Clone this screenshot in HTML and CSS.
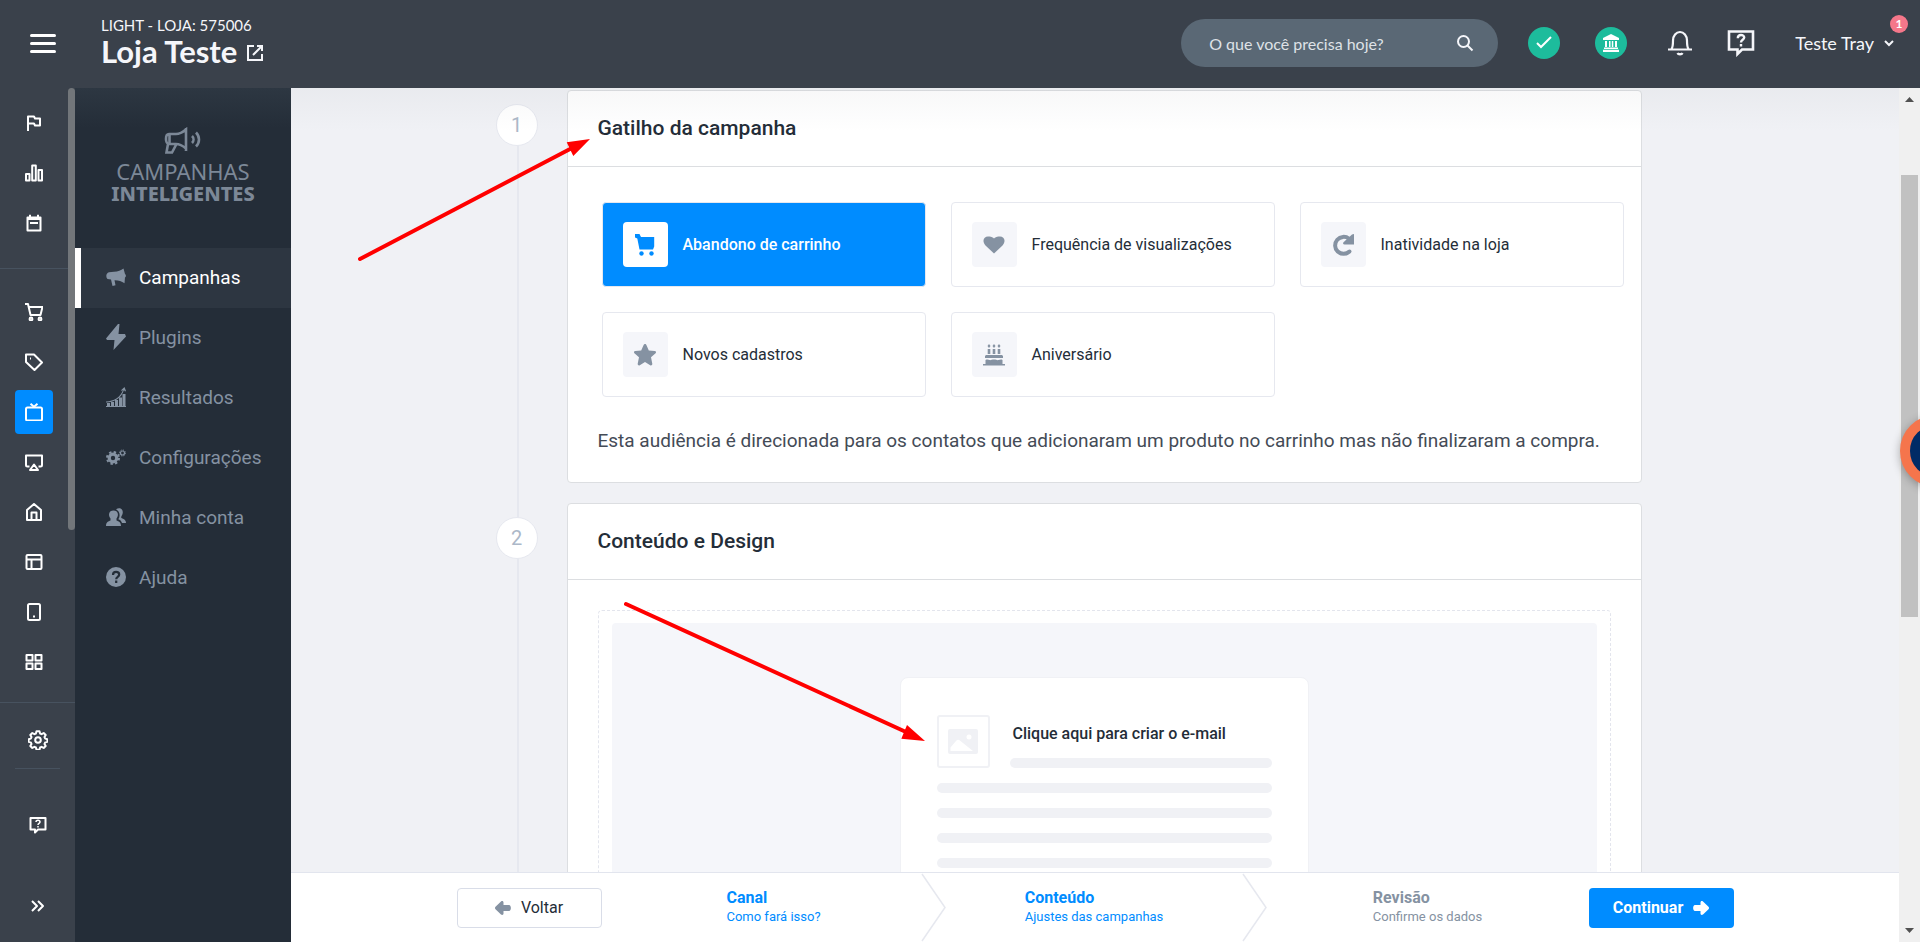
FILE: index.html
```html
<!DOCTYPE html>
<html lang="pt-BR">
<head>
<meta charset="utf-8">
<meta name="viewport" content="width=device-width, initial-scale=1">
<title>Campanhas Inteligentes - Loja Teste</title>
<link rel="stylesheet" href="styles.css">
</head>
<body>
<header class="topbar">
  <button class="menu-toggle" aria-label="Menu"><span></span><span></span><span></span></button>
  <div class="store">
    <span class="store-plan">LIGHT - LOJA: 575006</span>
    <a class="store-name" href="#">Loja Teste
      <svg width="16" height="16" viewBox="0 0 16 16" fill="none" stroke="currentColor" stroke-width="2"><path d="M7 1H1v14h14V9M10 1h5v5M15 1 6 10"/></svg>
    </a>
  </div>
  <form class="search">
    <input type="text" aria-label="Buscar" placeholder="O que você precisa hoje?">
    <button type="button" aria-label="Pesquisar"><svg width="18" height="18" viewBox="0 0 18 18" fill="none" stroke="currentColor" stroke-width="2"><circle cx="7.500" cy="7.500" r="5.500"/><path d="m11.500 11.500 5 5"/></svg></button>
  </form>
  <nav class="top-actions">
    <button class="round" aria-label="Status"><svg width="16" height="14" viewBox="0 0 16 14" fill="none" stroke="currentColor" stroke-width="2"><path d="m1 7 4 4L15 1"/></svg></button>
    <button class="round" aria-label="Banco"><svg width="18" height="18" viewBox="0 0 18 18" fill="currentColor"><path d="M9 0 1 4v2h16V4zM3 7h2v6H3zM7 7h1.500v6H7zM9.800 7h1.500v6H9.800zM13 7h2v6h-2zM2 13.500h14V15H2zM1 15.800h16V18H1z"/></svg></button>
    <button class="plain" aria-label="Notificações"><svg width="26" height="26" viewBox="0 0 26 26" fill="none" stroke="currentColor" stroke-width="2.200"><path d="M1 19.500h24M4.500 19c1.500-2 1.500-4 1.500-8.500a7 8.500 0 0 1 14 0c0 4.500 0 6.500 1.500 8.500"/><path d="M10.500 23a2.600 2 0 0 0 5 0" fill="currentColor"/></svg></button>
    <button class="plain" aria-label="Suporte"><svg width="28" height="28" viewBox="0 0 28 28" fill="none" stroke="currentColor" stroke-width="2.600"><path d="M2 2.500h24v18H15l-4.500 4.500v-4.500H2z"/><path d="M10.800 9.200c0-4.400 6.400-4 6.400-.6 0 2.200-3.200 2.200-3.200 4.800M14 15v2.600" stroke-width="2.400"/></svg></button>
    <button class="user">Teste Tray <svg width="10" height="7" viewBox="0 0 10 7" fill="none" stroke="currentColor" stroke-width="2"><path d="m1 1 4 4 4-4"/></svg><span class="badge">1</span></button>
  </nav>
</header>

<div class="shell">
  <aside class="rail">
    <div class="rail-scroll">
      <nav class="rail-list">
        <a href="#" aria-label="Início"><svg viewBox="0 0 18 18"><path d="M3 17V2.500h6l1 2h5v7h-5l-1-2H3"/></svg></a>
        <a href="#" aria-label="Relatórios"><svg viewBox="0 0 18 18"><path d="M1 10h3.500v6.500H1zM7.200 1.500h3.600v15H7.200zM13.500 6H17v10.500h-3.500z"/></svg></a>
        <a href="#" aria-label="Agenda"><svg viewBox="0 0 18 18"><path d="M2.500 3.500h13v13h-13zM5 .8v3M13 .8v3M2.500 5h13M5 9h8"/></svg></a>
        <hr>
        <a href="#" aria-label="Pedidos"><svg viewBox="0 0 18 18"><path d="M0 1h3l2.500 11h10L17.500 4H4"/><circle cx="6" cy="16" r="1.400"/><circle cx="15" cy="16" r="1.400"/></svg></a>
        <a href="#" aria-label="Produtos"><svg viewBox="0 0 18 18"><path d="M1 1.500h8l8 8-7.500 7.500L1 9zM5 5.500h1"/></svg></a>
        <a href="#" aria-label="Marketing" class="on"><svg viewBox="0 0 18 18"><rect x="1" y="4.500" width="16" height="13" rx="1.500"/><path d="m5.500.8 3.500 3 3.500-3"/></svg></a>
        <a href="#" aria-label="Canais"><svg viewBox="0 0 18 18"><path d="M4.500 13.500h-2C1.500 13.500 1 13 1 12V2.500h16V12c0 1-.5 1.500-1.500 1.500h-2M9 11.500l4 5.500H5z"/></svg></a>
        <a href="#" aria-label="Minha loja"><svg viewBox="0 0 18 18"><path d="M2 7 9 1l7 6v10H2zM6.500 17V9.500h5V17"/></svg></a>
        <a href="#" aria-label="Layout"><svg viewBox="0 0 18 18"><rect x="1.500" y="2" width="15" height="14" rx="1"/><path d="M1.500 6.500h15M6.500 6.500V16"/></svg></a>
        <a href="#" aria-label="Mobile"><svg viewBox="0 0 18 18"><rect x="3" y="1" width="12" height="16" rx="1.500"/><path d="M8 13.500h2M9 12.500v2"/></svg></a>
        <a href="#" aria-label="Aplicativos"><svg viewBox="0 0 18 18"><path d="M1.500 2h6v5.500h-6zM10.500 2h6v5.500h-6zM1.500 10.500h6V16h-6zM10.500 10.500h6V16h-6z"/></svg></a>
      </nav>
      <div class="rail-thumb"></div>
    </div>
    <div class="rail-foot">
      <a class="gear" href="#" aria-label="Configurações"><svg viewBox="0 0 20 20"><circle cx="10" cy="10" r="2.800"/><path d="M8.500 1.200h3l.6 2.300 1.500.7 2.100-1.200 2 2-1.200 2.100.7 1.500 2.200.6v2.600l-2.200.6-.7 1.500 1.200 2.100-2 2-2.100-1.200-1.500.7-.6 2.300h-3l-.6-2.300-1.500-.7L4.300 18l-2-2 1.200-2.100-.7-1.500-2.200-.6V9.200l2.200-.6.7-1.500L2.300 5l2-2 2.100 1.200 1.500-.7z"/></svg></a>
      <a class="help" href="#" aria-label="Suporte"><svg viewBox="0 0 18 18"><path d="M1.500 2h15v11.500H9L6 16.500v-3H1.500z"/><path d="M7 6c0-2.400 4-2.400 4 0 0 1.400-2 1.300-2 3M9 10v1.600" stroke-width="1.500"/></svg></a>
      <button class="expand" aria-label="Expandir"><svg viewBox="0 0 18 18"><path d="m3 4 5 5-5 5M9 4l5 5-5 5"/></svg></button>
    </div>
  </aside>

  <aside class="sidebar">
    <div class="brand">
      <svg width="40" height="28" viewBox="0 0 40 28" fill="none" stroke="currentColor" stroke-width="2.600"><path d="M6 7h7c4 0 7-2 10-4.500v19C20 19 17 17 13 17H6c-4 0-4-10 0-10zM6.500 7v10M5 17l-1.500 8.500H9L13.500 17M23 1v23M29 9c2 2 2 5 0 7M33 5.500c4 4 4 10 0 14"/></svg>
      <span class="brand-top">CAMPANHAS</span>
      <span class="brand-bottom">INTELIGENTES</span>
    </div>
    <nav class="side-list">
      <a class="current" href="#"><svg viewBox="0 0 20 20"><path d="M17.500 1.500C15 3.500 12 4.500 8 4.800l-5 .4C0 6-.5 10 1.500 12l3.500.5 1.500 6.500 3-.7-1-5c4-.1 7 1 10 3l.5-6c1.200-.5 1.200-2.800 0-3.300z"/></svg>Campanhas</a>
      <a href="#"><svg class="bolt" viewBox="0 0 20 26"><path d="M12 0 0 14.500l1 1.500h7.500L7.500 26 20 12.500 19 10h-6.500L13.500 0z"/></svg>Plugins</a>
      <a href="#"><svg viewBox="0 0 20 20"><path d="M1 16h3v3H1zM5 15h3v4H5zM9 13h3v6H9zM13 10.500h3V19h-3zM16.500 7h3v12h-3zM0 19h20v1H0zM0 14.500C8 14 14 11 17 3l-1.500 1-.2-1L18.500 0l1.500 4-1 .4-1-1.400C15 12 8 15.200 0 15.400z"/></svg>Resultados</a>
      <a href="#"><svg viewBox="0 0 20 20"><circle cx="7" cy="11" r="3.800" fill="none" stroke="currentColor" stroke-width="3.200"/><circle cx="7" cy="11" r="6" fill="none" stroke="currentColor" stroke-width="2" stroke-dasharray="2.400 2.310"/><circle cx="16.500" cy="6" r="2" fill="none" stroke="currentColor" stroke-width="1.200"/><circle cx="16.500" cy="6" r="3" fill="none" stroke="currentColor" stroke-width="1" stroke-dasharray="1.200 1.156"/></svg>Configurações</a>
      <a href="#"><svg viewBox="0 0 20 20"><path d="M7.500 3.500c5 0 5.500 5 3 8v2c2 .8 4.500 1.500 4.500 5.500H0c0-4 2.500-4.700 4.500-5.500v-2C2 8.500 2.500 3.500 7.500 3.500z"/><path d="M10 2.300C13.500-.5 18 2 16.500 7c-.5 1.500-1.500 2.500-1.200 4 2 .8 4.700 1.700 4.700 5h-4c-.5-2-2-3-3.700-3.700C14.500 9 14 4.500 10 2.300z"/></svg>Minha conta</a>
      <a href="#"><svg viewBox="0 0 20 20"><circle cx="10" cy="10" r="10"/><path d="M7 8c0-4.200 6.200-3.800 6.200-.4 0 2.400-3 2-3 4.600M10.200 13.500V16" fill="none" stroke="#242d38" stroke-width="2.200"/></svg>Ajuda</a>
    </nav>
  </aside>

  <main class="main">
    <div class="content">
      <div class="stage">
        <section class="step">
          <div class="marker"><span>1</span></div>
          <div class="card">
            <h2>Gatilho da campanha</h2>
            <div class="card-body">
              <div class="options">
                <button class="option selected"><span class="tile"><svg viewBox="0 0 22 22"><path d="M1 0h4.500l1.500 3h13.200v9.500L19 15.500H5.500L3.300 4.500 1 3.500z"/><circle cx="7.500" cy="19.500" r="2.200"/><circle cx="17.500" cy="19.500" r="2.200"/></svg></span>Abandono de carrinho</button>
                <button class="option"><span class="tile"><svg viewBox="0 0 22 22"><path d="M11 19.500 2.500 11.500C-1.500 6.500 1 2.500 5 2.500h1.500C8.500 2.500 10 3.500 11 4.500c1-1 2.500-2 4.500-2H17c4 0 6.500 4 2.500 9z"/></svg></span>Frequência de visualizações</button>
                <button class="option"><span class="tile"><svg viewBox="0 0 22 22"><path d="M17.500 17.500A8.500 8.500 0 1 1 17 4.800" fill="none" stroke="currentColor" stroke-width="4" stroke-linecap="round"/><path d="M22 0v10.500H12.500c-1.500 0-1.800-1.500-1-2.300L20 .5z"/></svg></span>Inatividade na loja</button>
                <button class="option"><span class="tile"><svg viewBox="0 0 22 22"><path d="M11 0c.7 0 1.200.5 1.500 1.200l2.300 5.300 6 .6c1.200.2 1.600 1.300.8 2.100L17 13.300l1.300 6.500c.2 1.300-1 2.200-2.100 1.500L11 18l-5.200 3.300c-1.100.7-2.300-.2-2.100-1.500L5 13.300.4 9.200C-.4 8.400 0 7.300 1.200 7.100l6-.6 2.300-5.300C9.800.5 10.300 0 11 0z"/></svg></span>Novos cadastros</button>
                <button class="option"><span class="tile"><svg viewBox="0 0 22 22"><path d="m6 0 1.500 2L6 4 4.500 2zM11 0l1.500 2L11 4 9.500 2zM16 0l1.500 2L16 4l-1.500-2zM4.700 5h2.600v5H4.700zM9.700 5h2.600v5H9.700zM14.700 5h2.600v5h-2.600zM3 11h16l1 1v2H2v-2zM2.500 16c2-1 3-.3 4 .1s2.500-.6 4.500-.6 3 1 4.500.6 2.500-1 4-.1V20H22v1.500H0V20h2.500z"/></svg></span>Aniversário</button>
              </div>
              <p>Esta audiência é direcionada para os contatos que adicionaram um produto no carrinho mas não finalizaram a compra.</p>
            </div>
          </div>
        </section>
        <section class="step">
          <div class="marker"><span>2</span></div>
          <div class="card">
            <h2>Conteúdo e Design</h2>
            <div class="design">
              <div class="dropzone">
                <div class="canvas">
                  <a class="mail" href="#">
                    <span class="mail-head">
                      <span class="thumb"><svg width="30" height="25" viewBox="0 0 30 25"><rect width="30" height="25" rx="2" fill="#f0f1f5"/><circle cx="21" cy="8" r="2.500" fill="#fff"/><path d="M2.500 22v-3.500L8 12c1.500-1.700 2.500-1.700 4.500 0L25 22z" fill="#fff"/></svg></span>
                      <span class="mail-title"><span class="mail-text">Clique aqui para criar o e-mail</span><span class="bar"></span></span>
                    </span>
                    <span class="bar"></span><span class="bar"></span><span class="bar"></span><span class="bar"></span><span class="bar"></span>
                  </a>
                </div>
              </div>
            </div>
          </div>
        </section>
      </div>
    </div>
    <footer class="wizard">
      <div class="wizard-inner">
        <button class="btn back"><svg width="16" height="14" viewBox="0 0 16 14"><path d="M6 .5c1.500-1 2.500 0 2.500 1V4H14c2.500 0 2.500 6 0 6H8.500v2.500c0 1-1 2-2.500 1L.5 8.200c-.7-.7-.7-1.700 0-2.400z"/></svg>Voltar</button>
        <ol class="stages">
          <li class="done"><a href="#"><b>Canal</b><span>Como fará isso?</span></a><svg class="sep" width="25" height="69" viewBox="0 0 25 69"><path d="m1 1 23 33.500L1 68"/></svg></li>
          <li class="done"><a href="#"><b>Conteúdo</b><span>Ajustes das campanhas</span></a><svg class="sep" width="25" height="69" viewBox="0 0 25 69"><path d="m1 1 23 33.500L1 68"/></svg></li>
          <li><a href="#"><b>Revisão</b><span>Confirme os dados</span></a></li>
        </ol>
        <button class="btn next">Continuar<svg width="16" height="14" viewBox="0 0 16 14"><path d="M10 .5C8.500-.5 7.500.5 7.500 1.500V4H2C-.5 4-.5 10 2 10h5.500v2.500c0 1 1 2 2.500 1l5.500-5.300c.7-.7.7-1.700 0-2.400z"/></svg></button>
      </div>
    </footer>
  </main>
  <div class="scrollbar">
    <svg width="9" height="5" viewBox="0 0 9 5"><path d="M0 5 4.500 0 9 5z"/></svg>
    <div class="track"><div class="thumb-bar"></div></div>
    <svg width="9" height="5" viewBox="0 0 9 5"><path d="M0 0h9L4.500 5z"/></svg>
  </div>
</div>
<button class="chat-bubble" aria-label="Chat"></button>
<svg class="arrows" width="640" height="640" viewBox="340 120 640 640" fill="#f00" stroke="#f00" stroke-linecap="round">
  <path d="M360 259 572 148M626 604 906 732" stroke-width="4"/>
  <path d="m590 139-23.300 3.300 6.600 13.700zM925 741l-18-16-5.700 13.700z" stroke="none"/>
</svg>
</body>
</html>
```

FILE: styles.css
```css
* { box-sizing: border-box; }

body {
  margin: 0;
  height: 100vh;
  overflow: hidden;
  display: flex;
  flex-direction: column;
  background: #f0f1f5;
  color: #242d38;
  font-family: Roboto, "Liberation Sans", sans-serif;
}

a { color: inherit; text-decoration: none; }
button { font: inherit; color: inherit; background: none; border: 0; padding: 0; cursor: pointer; }
svg { display: block; flex: none; }

/* top bar */
.topbar {
  flex: none;
  height: 88px;
  display: flex;
  align-items: center;
  padding: 0 26px 2px 30px;
  background: #3a414b;
  color: #f5f6fa;
  font-family: Lato, "Open Sans", sans-serif;
}
.menu-toggle { display: grid; gap: 5px; width: 26px; margin-right: 45px; }
.menu-toggle span { height: 3px; border-radius: 2px; background: #fff; }
.store { display: flex; flex-direction: column; margin-right: auto; padding-bottom: 2px; }
.store-plan { font-size: 15px; line-height: 18px; }
.store-name { display: flex; align-items: center; gap: 10px; font-size: 31px; line-height: 34px; font-weight: 700; }
.store-name svg { margin-top: 4px; }
.search {
  display: flex;
  align-items: center;
  width: 317px;
  height: 48px;
  padding: 0 24px 0 28px;
  border-radius: 24px;
  background: #5a6875;
}
.search input {
  flex: 1;
  min-width: 0;
  border: 0;
  padding: 0;
  outline: 0;
  background: none;
  color: #fff;
  font: 16px "Lato", sans-serif;
}
.search input::placeholder { color: #dfe2e7; opacity: 1; }
.top-actions { display: flex; align-items: center; margin-left: 30px; }
.round {
  display: grid;
  place-items: center;
  width: 32px;
  height: 32px;
  margin-right: 35px;
  border-radius: 50%;
  background: #1dbc9c;
  color: #fff;
}
.plain { margin-right: 34px; }
.round + .plain { margin-left: 5px; }
.user { position: relative; display: flex; align-items: center; gap: 10px; margin-left: 6px; font-size: 18px; }
.badge {
  position: absolute;
  right: -14px;
  top: -17px;
  width: 18px;
  height: 18px;
  border-radius: 9px;
  background: #f5778a;
  color: #fff;
  font-size: 12px;
  line-height: 18px;
  font-weight: 700;
}

.shell { flex: 1; min-height: 0; display: flex; }

/* icon rail */
.rail { flex: none; width: 75px; display: flex; flex-direction: column; background: #3a414b; color: #fff; }
.rail svg { width: 18px; height: 18px; fill: none; stroke: currentColor; stroke-width: 2; stroke-linejoin: round; }
.rail-scroll { flex: 1; min-height: 0; display: flex; overflow: hidden; border-bottom: 1px solid #47525f; }
.rail-list { flex: 1; display: flex; flex-direction: column; align-items: center; padding-top: 10px; }
.rail-list a { flex: none; display: grid; place-items: center; width: 38px; height: 44px; margin: 3px 0; border-radius: 4px; }
.rail-list a.on { background: #008cff; }
.rail-list hr { width: 100%; border: 0; border-top: 1px solid #47525f; margin: 20px 0 18px; }
.rail-thumb { width: 7px; height: 72%; border-radius: 4px; background: #72767a; }
.rail-foot { flex: none; height: 239px; display: flex; flex-direction: column; align-items: center; }
.rail-foot a, .expand { display: grid; place-items: center; width: 45px; }
.rail-foot .gear { height: 66px; padding-top: 8px; border-bottom: 1px solid #47525f; }
.rail-foot .gear svg { width: 20px; height: 20px; }
.rail-foot .help { height: 112px; }
.expand { height: 50px; }

/* product sidebar */
.sidebar {
  flex: none;
  width: 216px;
  background: linear-gradient(#2d3742, #242d38 40px);
  color: #8592a2;
}
.brand { height: 160px; display: flex; flex-direction: column; align-items: center; padding-top: 39px; color: #7c8897; font-family: "Noto Sans", sans-serif; }
.brand-top { margin-top: 5px; font-size: 22px; line-height: 22px; }
.brand-bottom { font-size: 20px; line-height: 24px; font-weight: 800; }
.side-list a { display: flex; align-items: center; gap: 13px; height: 60px; padding: 0 0 2px 31px; font-size: 19px; }
.side-list svg { width: 20px; height: 20px; fill: currentColor; }
.side-list svg.bolt { height: 26px; }
.side-list .current { background: #2d3641; border-left: 6px solid #fff; padding-left: 25px; color: #fff; }
.side-list .current svg { color: #8592a2; }

/* content */
.main { flex: 1; min-width: 0; display: flex; flex-direction: column; }
.content {
  flex: 1;
  min-height: 0;
  overflow: hidden;
  position: relative;
}
.content::after {
  content: "";
  position: absolute;
  inset: 0 0 auto;
  height: 44px;
  background: linear-gradient(rgba(60, 70, 80, .04), transparent);
  pointer-events: none;
}
.stage { max-width: 1277px; margin: 0 auto; padding: 2px 92px 0 39px; }
.step { display: flex; }
.marker { flex: none; width: 71px; background: linear-gradient(#e6e8ef, #e6e8ef) 21px 0 / 2px 100% no-repeat; }
.marker span {
  display: grid;
  place-items: center;
  width: 42px;
  height: 42px;
  margin-top: 14px;
  border: 1px solid #e6e8ef;
  border-radius: 50%;
  background: #fff;
  color: #acb8c8;
  font-size: 20px;
}
.step:first-child .marker { background-position: 21px 20px; }
.card { flex: 1; min-width: 0; margin-bottom: 20px; border: 1px solid #dcdee1; border-radius: 4px; background: #fff; }
.card h2 { margin: 0; padding: 0 30px; border-bottom: 1px solid #dcdee1; font-size: 21px; line-height: 75px; font-weight: 500; }
.card-body { padding: 35px 17px 27px 34px; }
.options { display: grid; grid-template-columns: repeat(3, 1fr); gap: 25px; }
.option {
  display: flex;
  align-items: center;
  gap: 15px;
  height: 85px;
  padding: 0 20px;
  border: 1px solid #e6e8ef;
  border-radius: 4px;
  background: #fff;
  font-size: 16px;
  text-align: left;
}
.option.selected { background: #008cff; color: #fff; font-weight: 500; }
.tile { flex: none; display: grid; place-items: center; width: 45px; height: 45px; border-radius: 4px; background: #f5f6fa; color: #8592a2; }
.tile svg { width: 22px; height: 22px; fill: currentColor; }
.selected .tile { background: #fff; color: #008cff; }
.card-body p { margin: 30px 0 0 -4px; font-size: 19px; line-height: 28px; color: #444b56; }

.design { padding: 30px; }
.dropzone { padding: 12px 13px; border: 1px dashed #e3e5ed; border-radius: 4px; }
.canvas { display: flex; justify-content: center; padding: 54px 20px; border-radius: 4px; background: #f5f6fa; }
.mail { display: grid; gap: 15px; width: 409px; padding: 37px 36px 40px; border: 1px solid #f0f1f5; border-radius: 8px; background: #fff; }
.mail-head { display: flex; gap: 20px; }
.thumb { flex: none; display: grid; place-items: center; width: 53px; height: 53px; border: 2px solid #f0f1f5; border-radius: 3px; }
.mail-title { flex: 1; display: flex; flex-direction: column; justify-content: space-between; }
.mail-text { padding: 7px 0 0 3px; font-size: 16px; line-height: 24px; font-weight: 500; }
.bar { height: 10px; border-radius: 5px; background: #f0f1f5; }

/* wizard footer */
.wizard { flex: none; height: 70px; padding: 0 20px; border-top: 1px solid #e2e5ee; background: #fff; }
.wizard-inner { max-width: 1277px; height: 100%; margin: 0 auto; display: flex; align-items: center; }
.btn { flex: none; display: flex; align-items: center; justify-content: center; gap: 10px; width: 145px; height: 40px; border-radius: 4px; font-size: 16px; }
.btn svg { fill: currentColor; }
.back { border: 1px solid #d9dde8; }
.back svg { color: #8592a2; }
.next { background: #008cff; color: #fff; font-weight: 700; }
.stages { flex: 1; display: grid; grid-template-columns: 344fr 321fr 322fr; height: 100%; margin: 0; padding: 0; list-style: none; color: #8592a2; }
.stages li { display: flex; align-items: center; justify-content: center; position: relative; }
.stages li + .done { padding-right: 24px; }
.stages .done { color: #008cff; }
.stages a { display: grid; padding-bottom: 2px; }
.stages b { font-size: 16px; line-height: 20px; font-weight: 700; }
.stages span { font-size: 13px; line-height: 18px; }
.sep { position: absolute; right: 0; top: 0; fill: none; stroke: #e6e8ef; stroke-width: 1.500; }

/* page scrollbar */
.scrollbar { flex: none; width: 21px; display: flex; flex-direction: column; align-items: center; padding: 9px 0; background: #f0f0f0; }
.scrollbar > svg { fill: #505050; }
.track { flex: 1; width: 17px; padding: 73px 0; }
.thumb-bar { height: 65%; background: #c1c1c1; }

/* floating items over the page */
.chat-bubble {
  position: fixed;
  right: -52px;
  top: 415px;
  width: 72px;
  height: 72px;
  border: 10px solid #f5754c;
  border-radius: 50%;
  background: #002b66;
  box-shadow: 0 2px 10px rgba(0, 0, 0, .3);
}
.arrows { position: fixed; left: 340px; top: 120px; pointer-events: none; }
```
